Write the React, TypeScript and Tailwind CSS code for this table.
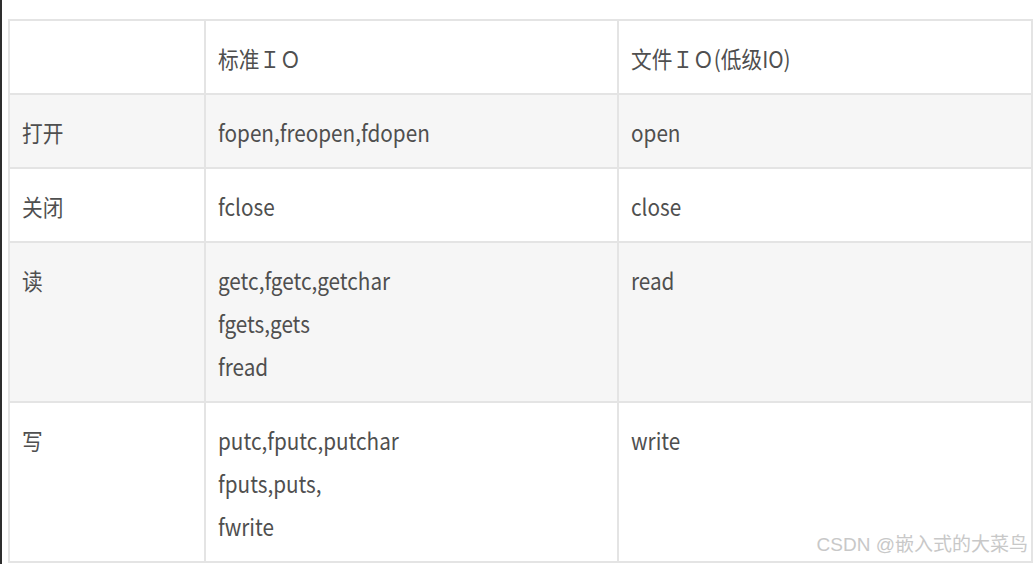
import React from "react"

interface Row {
  label: string
  std: string[]
  file: string[]
}

const rows: Row[] = [
  { label: "打开", std: ["fopen,freopen,fdopen"], file: ["open"] },
  { label: "关闭", std: ["fclose"], file: ["close"] },
  { label: "读", std: ["getc,fgetc,getchar", "fgets,gets", "fread"], file: ["read"] },
  { label: "写", std: ["putc,fputc,putchar", "fputs,puts,", "fwrite"], file: ["write"] },
]

const font = { fontFamily: '"Noto Sans CJK SC", "Noto Sans", sans-serif' }

function Cell({ lines }: { lines: string[] }) {
  return (
    <td className="border-2 border-[#e4e4e4] align-top px-[12px] pt-[16px] pb-[13px]">
      {lines.map((l, i) => (
        <div key={i} className="leading-[43px] h-[43px] whitespace-nowrap">
          <span className="inline-block origin-left scale-x-[0.9]">{l}</span>
        </div>
      ))}
    </td>
  )
}

export default function App() {
  return (
    <div
      className="relative w-[1033px] h-[564px] bg-white overflow-hidden border-l-2 border-[#2e2e2e] pl-[6px] pt-[19px] text-[23px] text-[#4f4f4f]"
      style={font}
    >
      <table className="border-collapse table-fixed w-[1023px]">
        <colgroup>
          <col className="w-[196px]" />
          <col className="w-[413px]" />
          <col className="w-[414px]" />
        </colgroup>
        <tbody>
          <tr className="bg-white">
            <Cell lines={[""]} />
            <Cell lines={["标准ＩＯ"]} />
            <Cell lines={["文件ＩＯ(低级IO)"]} />
          </tr>
          {rows.map((r, i) => (
            <tr key={r.label} className={i % 2 === 0 ? "bg-[#f6f6f6]" : "bg-white"}>
              <Cell lines={[r.label]} />
              <Cell lines={r.std} />
              <Cell lines={r.file} />
            </tr>
          ))}
        </tbody>
      </table>
      {/* watermark */}
      <div
        className="absolute right-[5px] bottom-[5px] text-[19px] text-[#c8c8c8]"
        style={{ fontFamily: '"Liberation Sans", "Noto Sans CJK SC", sans-serif' }}
      >
        CSDN @嵌入式的大菜鸟
      </div>
    </div>
  )
}
